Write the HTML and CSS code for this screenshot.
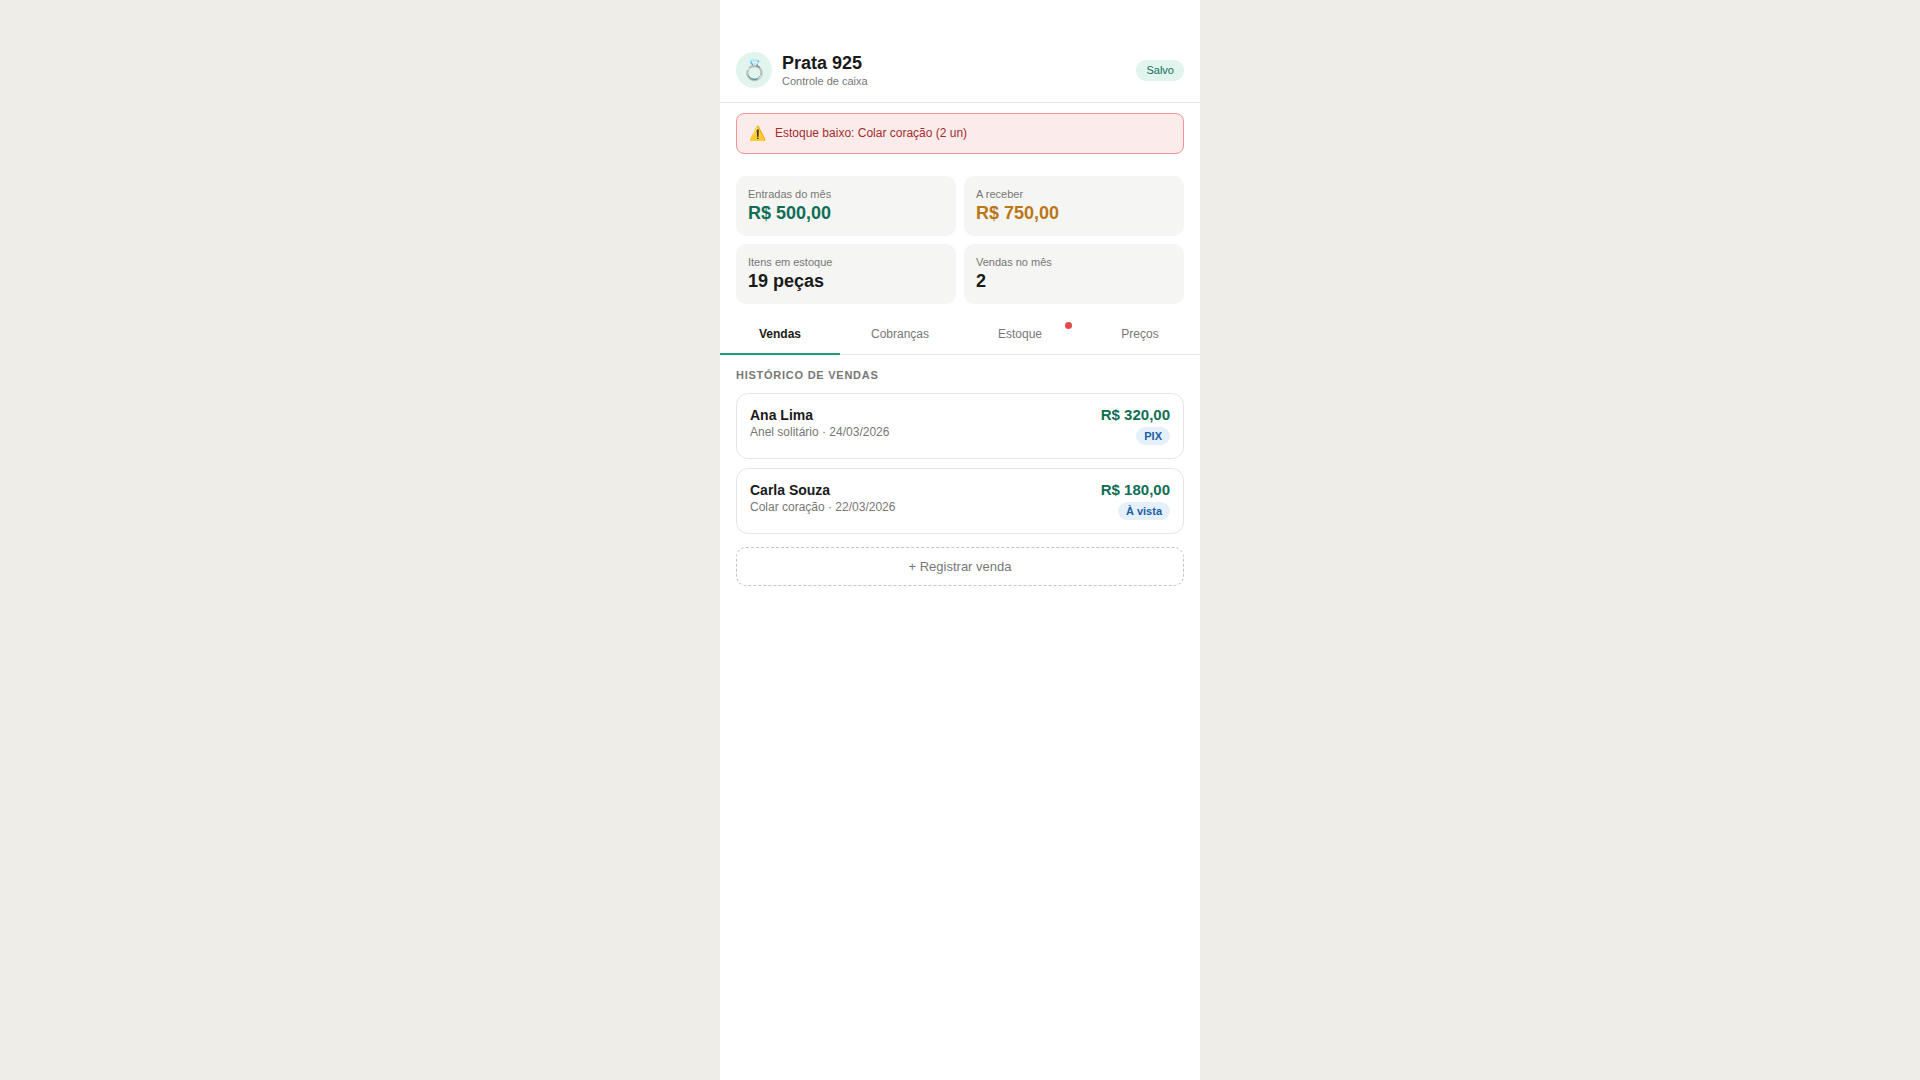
FILE: index.html
```html
<!DOCTYPE html>
<html lang="pt-BR">
<head>
<meta charset="utf-8">
<title>Prata 925</title>
<link rel="stylesheet" href="styles.css">
</head>
<body>
<main class="app">
  <header class="header">
    <div class="brand">
      <div class="avatar">💍</div>
      <div class="brand-text">
        <div class="title">Prata 925</div>
        <div class="subtitle">Controle de caixa</div>
      </div>
    </div>
    <span class="saved">Salvo</span>
  </header>
  <div class="alert"><span class="alert-icon">⚠️</span><span>Estoque baixo: Colar coração (2 un)</span></div>
  <section class="metrics">
    <div class="metric"><div class="metric-label">Entradas do mês</div><div class="metric-value green">R$ 500,00</div></div>
    <div class="metric"><div class="metric-label">A receber</div><div class="metric-value amber">R$ 750,00</div></div>
    <div class="metric"><div class="metric-label">Itens em estoque</div><div class="metric-value">19 peças</div></div>
    <div class="metric"><div class="metric-label">Vendas no mês</div><div class="metric-value">2</div></div>
  </section>
  <nav class="tabs">
    <div class="tab active">Vendas</div>
    <div class="tab">Cobranças</div>
    <div class="tab">Estoque<span class="dot"></span></div>
    <div class="tab">Preços</div>
  </nav>
  <section class="content">
    <div class="section-title">HISTÓRICO DE VENDAS</div>
    <div class="sale">
      <div><div class="sale-name">Ana Lima</div><div class="sale-detail">Anel solitário · 24/03/2026</div></div>
      <div class="sale-right"><div class="sale-price">R$ 320,00</div><span class="pill">PIX</span></div>
    </div>
    <div class="sale">
      <div><div class="sale-name">Carla Souza</div><div class="sale-detail">Colar coração · 22/03/2026</div></div>
      <div class="sale-right"><div class="sale-price">R$ 180,00</div><span class="pill">À vista</span></div>
    </div>
    <button class="add">+ Registrar venda</button>
  </section>
</main>
</body>
</html>
```
FILE: styles.css
```css
* { box-sizing: border-box; }
html, body { margin: 0; height: 100%; }
body {
  background: #efede8;
  font-family: "Liberation Sans", Arial, sans-serif;
  color: #1a1a1a;
  display: flex;
  justify-content: center;
}
.app { width: 480px; min-height: 1080px; background: #fff; }
.header {
  height: 103px;
  padding: 52px 16px 14px;
  border-bottom: 1px solid #e5e5e5;
  display: flex;
  align-items: center;
  justify-content: space-between;
}
.brand { display: flex; align-items: center; gap: 10px; }
.avatar {
  width: 36px; height: 36px; border-radius: 50%;
  background: #e1f5ee;
  display: flex; align-items: center; justify-content: center;
  font-size: 20px;
}
.title { font-size: 18px; font-weight: 700; line-height: 23px; color: #1a1a1a; }
.subtitle { font-size: 11px; line-height: 13px; color: #777; }
.saved {
  background: #e1f5ee; color: #0f6e56;
  font-size: 11px; line-height: 13px;
  padding: 4px 10px; border-radius: 10px;
}
.alert {
  margin: 10px 16px 0;
  height: 41px;
  background: #fcebeb;
  border: 1px solid #f09595;
  border-radius: 8px;
  padding: 0 12px 1px;
  display: flex; align-items: center; gap: 9px;
  font-size: 12px; color: #a32d2d;
}
.alert-icon { font-size: 14px; }
.metrics {
  margin: 22px 16px 0;
  display: grid;
  grid-template-columns: 1fr 1fr;
  gap: 8px;
}
.metric { height: 60px; background: #f5f5f3; border-radius: 10px; padding: 12px; }
.metric-label { font-size: 11px; line-height: 13px; color: #777; margin-bottom: 2px; }
.metric-value { font-size: 18px; font-weight: 700; line-height: 21px; color: #1a1a1a; }
.green { color: #0f6e56; }
.amber { color: #bb7617; }
.tabs { display: flex; margin-top: 10px; border-bottom: 1px solid #e5e5e5; }
.tab {
  position: relative;
  flex: 1;
  height: 41px;
  margin-bottom: -1px;
  border-bottom: 2px solid transparent;
  text-align: center;
  font-size: 12px;
  line-height: 14px;
  padding-top: 13px;
  color: #777;
}
.tab.active { font-weight: 700; color: #1a1a1a; border-bottom-color: #1d9e75; }
.dot {
  position: absolute;
  top: 8px; right: 8px;
  width: 7px; height: 7px;
  border-radius: 50%;
  background: #e24b4a;
}
.content { padding: 14px 16px 0; }
.section-title {
  font-size: 11px; font-weight: 700; letter-spacing: 0.75px;
  line-height: 13px; color: #777; margin-bottom: 11px;
}
.sale {
  height: 66px;
  border: 1px solid #e5e5e5;
  border-radius: 12px;
  padding: 13px 13px 0;
  margin-bottom: 9px;
  display: flex;
  justify-content: space-between;
}
.sale-name { font-size: 14px; font-weight: 700; line-height: 16px; color: #1a1a1a; margin-bottom: 2px; }
.sale-detail { font-size: 12px; line-height: 14px; color: #777; }
.sale-right { display: flex; flex-direction: column; align-items: flex-end; margin-top: -1px; }
.sale-price { font-size: 15px; font-weight: 700; line-height: 17px; color: #0f6e56; margin-bottom: 4px; }
.pill {
  background: #e6f0fa; color: #185fa5;
  font-size: 11px; font-weight: 700; line-height: 14px;
  padding: 2px 8px; border-radius: 9px;
}
.add {
  display: block;
  width: 100%;
  height: 39px;
  margin-top: 13px;
  background: #fff;
  border: 1px dashed #c4c4c4;
  border-radius: 10px;
  font-family: inherit;
  font-size: 13px;
  color: #777;
}
```
